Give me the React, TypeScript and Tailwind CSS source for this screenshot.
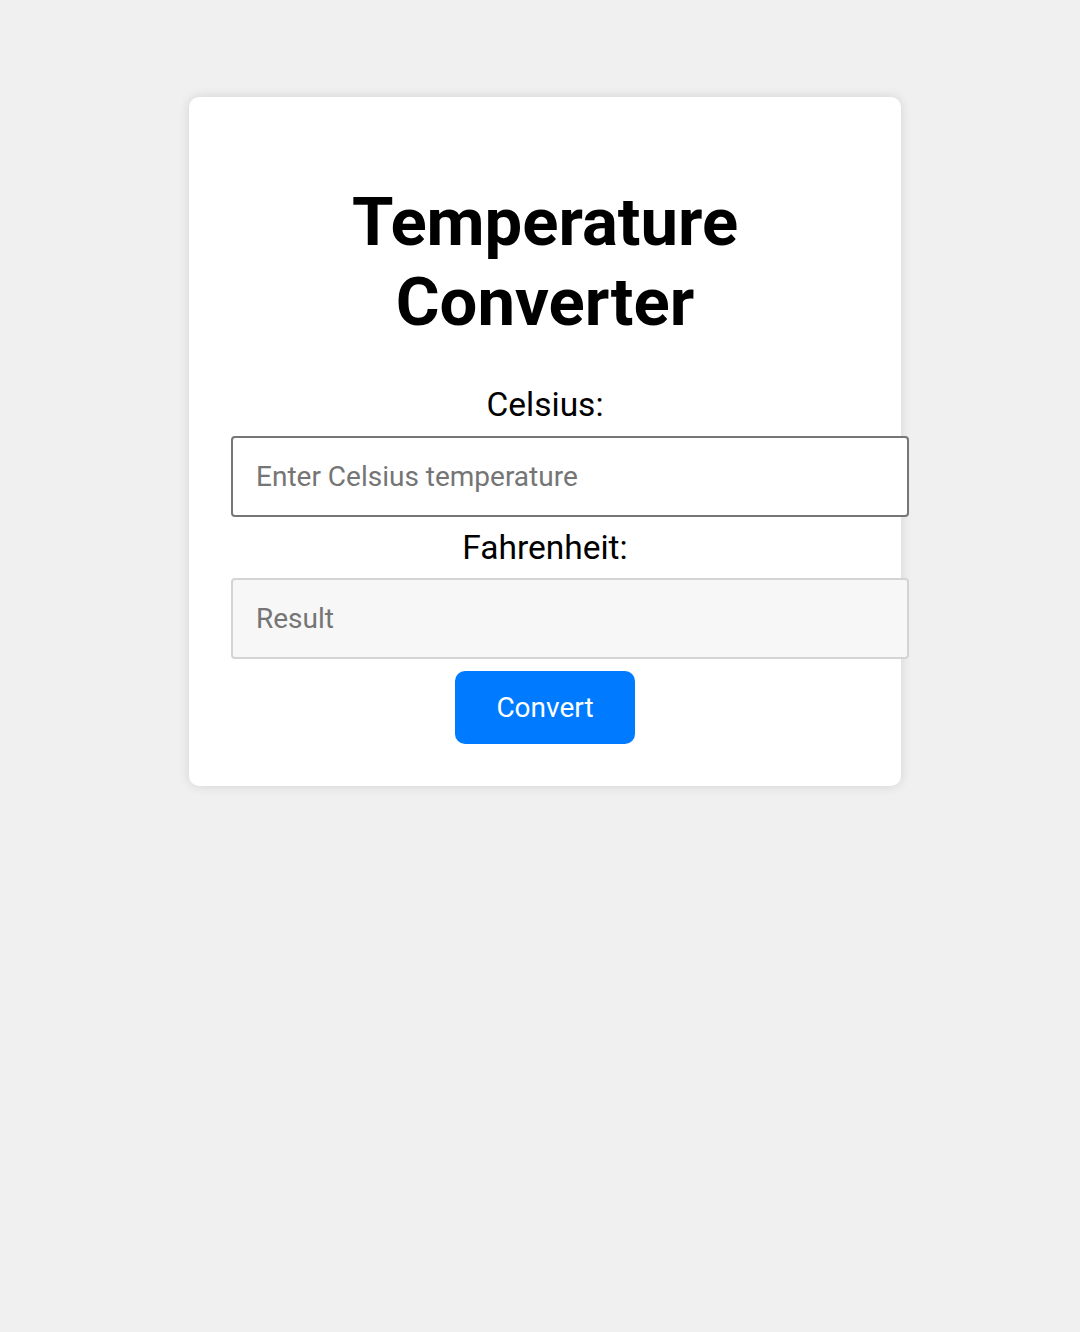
import React from "react";

export default function App() {
  return (
    <div
      className="min-h-[1332px] w-full bg-[#f0f0f0] pt-[97px]"
      style={{ fontFamily: "Roboto, 'Liberation Sans', sans-serif" }}
    >
      <div className="ml-[189px] w-[712px] rounded-[10px] bg-white p-[42px] text-center shadow-[0_0_12px_rgba(0,0,0,0.12)]">
        <h1 className="mt-[43px] text-[67px] font-bold leading-[80px] text-black">
          Temperature
          <br />
          Converter
        </h1>
        <label className="mt-[44px] block text-[33.5px] leading-[38px] text-black">
          Celsius:
        </label>
        <input
          type="text"
          placeholder="Enter Celsius temperature"
          className="mt-[12px] block h-[81px] w-[678px] rounded-[4px] border-2 border-[#767676] bg-white px-[23px] text-[28px] text-black placeholder:text-[#757575] outline-none"
        />
        <label className="mt-[12px] block text-[33.5px] leading-[38px] text-black">
          Fahrenheit:
        </label>
        <input
          type="text"
          placeholder="Result"
          readOnly
          className="mt-[11px] block h-[81px] w-[678px] rounded-[4px] border-2 border-[#d4d4d4] bg-[#f7f7f7] px-[23px] text-[28px] text-black placeholder:text-[#757575] outline-none"
        />
        <button className="mx-auto mt-[12px] block h-[73px] w-[180px] rounded-[10px] bg-[#007bff] text-[28px] text-white">
          Convert
        </button>
      </div>
    </div>
  );
}
